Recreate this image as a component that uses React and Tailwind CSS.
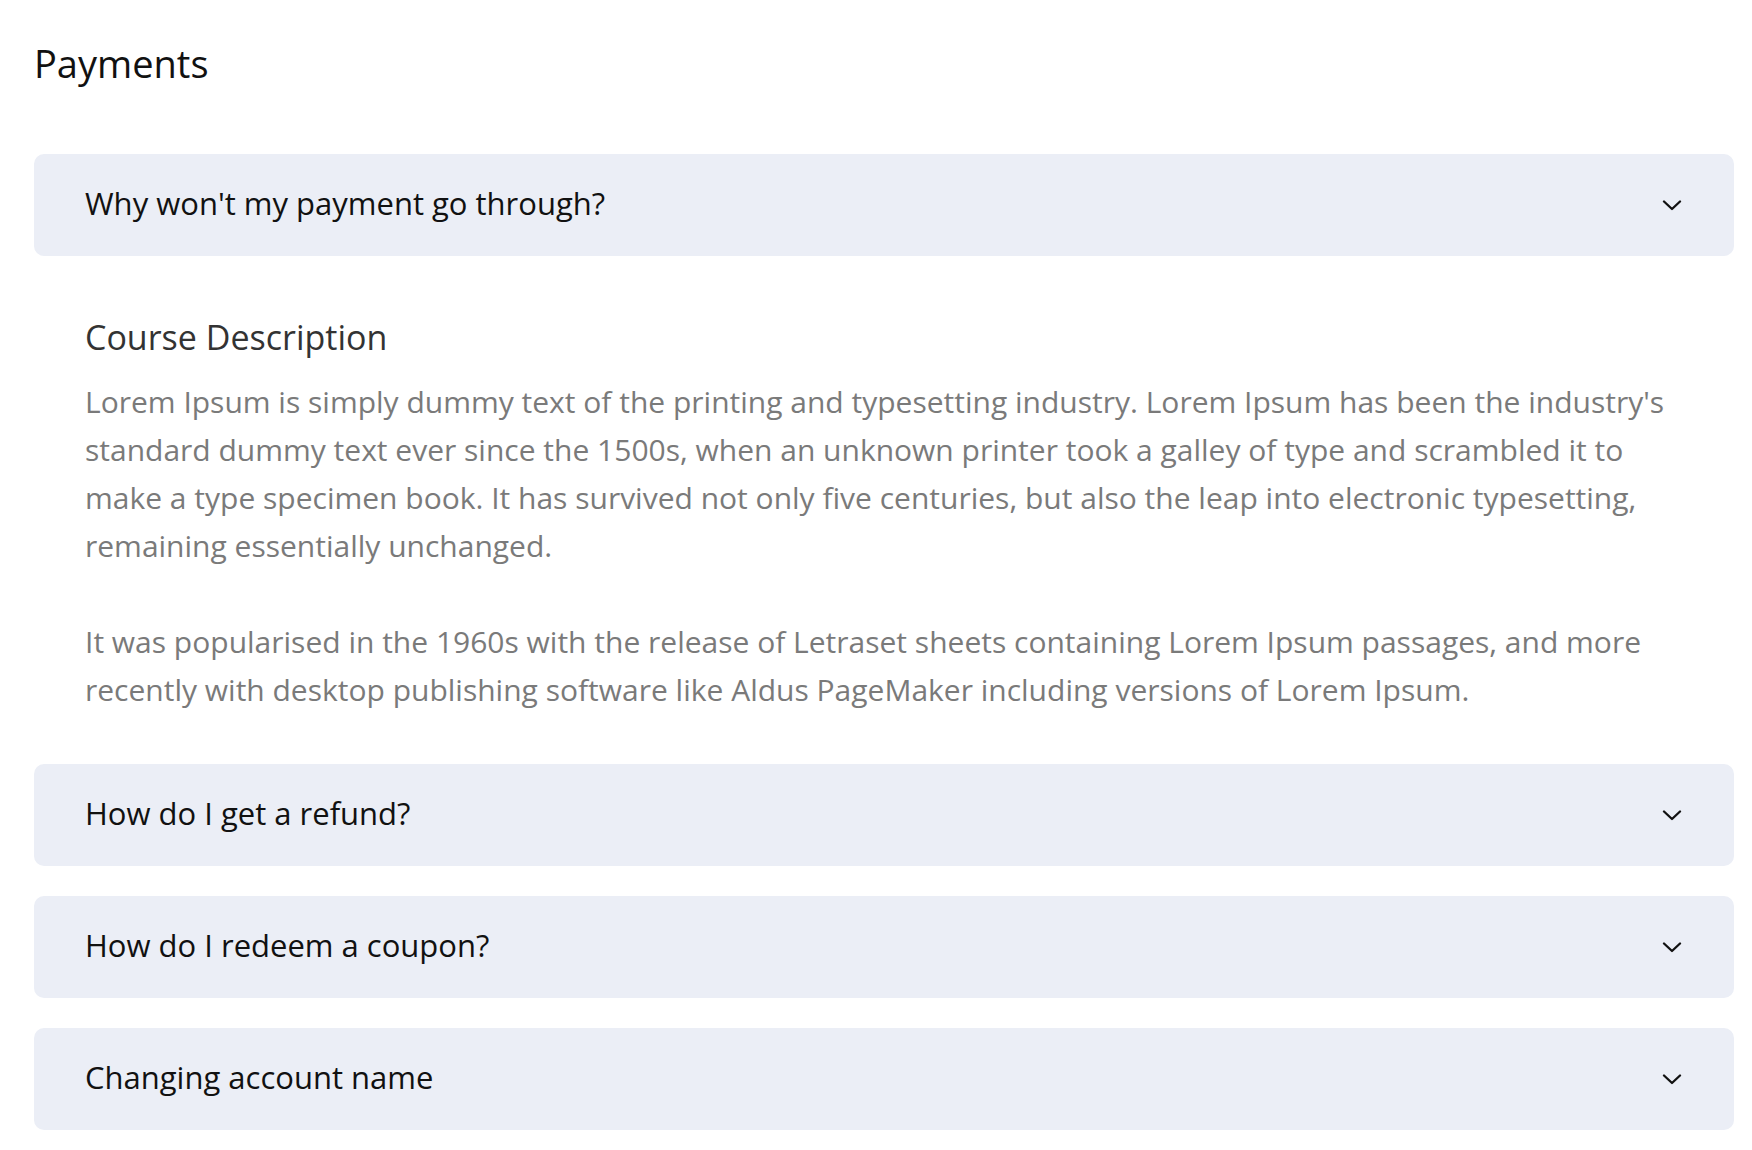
const QUESTIONS_AFTER = ['How do I get a refund?', 'How do I redeem a coupon?', 'Changing account name']

function Chevron() {
  return (
    <svg width="20" height="11" viewBox="0 0 20 11" fill="none" className="shrink-0">
      <polyline points="2,1.5 10,9 18,1.5" stroke="#111" strokeWidth="2.3" strokeLinecap="round" strokeLinejoin="round" />
    </svg>
  )
}

function Question({ title }) {
  return (
    <button className="w-full h-[102px] flex items-center justify-between pl-[51px] pr-[52px] pb-[4px] rounded-[10px] bg-[#ebeef6] text-left">
      <span className="text-[31px] text-[#111]">{title}</span>
      <span className="pt-[4px]"><Chevron /></span>
    </button>
  )
}

export default function App() {
  return (
    <div className="min-h-screen bg-white pl-[34px] pr-[18px] font-['Open_Sans',sans-serif]">
      {/* heading */}
      <h2 className="pt-[39px] text-[38px] leading-[48px] text-[#111]">Payments</h2>

      <div className="mt-[67px] flex flex-col">
        <Question title="Why won't my payment go through?" />

        {/* open panel */}
        <div className="pl-[51px] pr-[52px] pt-[60px] pb-[50px]">
          <h3 className="text-[34px] leading-[42px] text-[#333] mb-[20px]">Course Description</h3>
          <p className="text-[30px] leading-[48px] text-[#7a7a7a]">
            Lorem Ipsum is simply dummy text of the printing and typesetting industry. Lorem Ipsum has been the industry's standard dummy text ever since the 1500s, when an unknown printer took a galley of type and scrambled it to make a type specimen book. It has survived not only five centuries, but also the leap into electronic typesetting, remaining essentially unchanged.
            <br />
            <br />
            It was popularised in the 1960s with the release of Letraset sheets containing Lorem Ipsum passages, and more recently with desktop publishing software like Aldus PageMaker including versions of Lorem Ipsum.
          </p>
        </div>

        <div className="flex flex-col gap-[30px]">
          {QUESTIONS_AFTER.map(q => <Question key={q} title={q} />)}
        </div>
      </div>
    </div>
  )
}
